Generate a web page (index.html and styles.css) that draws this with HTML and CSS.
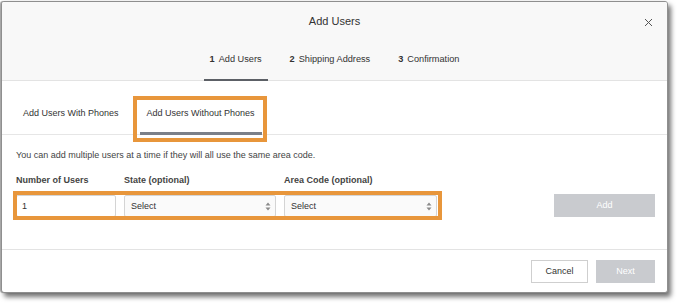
FILE: index.html
```html
<!DOCTYPE html>
<html>
<head>
<meta charset="utf-8">
<title>Add Users</title>
<link rel="stylesheet" href="styles.css">
</head>
<body>
<div class="dialog">
  <div class="header">
    <div class="title">Add Users</div>
    <div class="close"><svg width="9" height="9" viewBox="0 0 9 9"><path d="M1 1L8 8M8 1L1 8" stroke="#555" stroke-width="1" fill="none"/></svg></div>
    <div class="steps">
      <div class="step active"><b>1</b><span>Add Users</span></div>
      <div class="step"><b>2</b><span>Shipping Address</span></div>
      <div class="step"><b>3</b><span>Confirmation</span></div>
    </div>
  </div>
  <div class="content">
    <div class="tabs">
      <div class="tab">Add Users With Phones</div>
      <div class="tab active">Add Users Without Phones</div>
    </div>
    <p class="desc">You can add multiple users at a time if they will all use the same area code.</p>
    <div class="form">
      <label class="lbl">Number of Users</label>
      <label class="lbl">State (optional)</label>
      <label class="lbl">Area Code (optional)</label>
      <span></span>
      <span></span>
      <div class="input">1</div>
      <div class="select">Select<svg class="arrows" width="6" height="9" viewBox="0 0 6 9"><path d="M0.5 3.5L3 0.5L5.5 3.5Z M0.5 5.5L3 8.5L5.5 5.5Z" fill="#8a8a8a"/></svg></div>
      <div class="select">Select<svg class="arrows" width="6" height="9" viewBox="0 0 6 9"><path d="M0.5 3.5L3 0.5L5.5 3.5Z M0.5 5.5L3 8.5L5.5 5.5Z" fill="#8a8a8a"/></svg></div>
      <span></span>
      <div class="btn disabled add">Add</div>
    </div>
  </div>
  <div class="footer">
    <div class="btn cancel">Cancel</div>
    <div class="btn disabled next">Next</div>
  </div>
</div>
<div class="mark mark-tab"></div>
<div class="mark mark-row"></div>
</body>
</html>
```
FILE: styles.css
```css
html, body {
  margin: 0;
  padding: 0;
  background: #ffffff;
}
body {
  font-family: "Liberation Sans", Arial, sans-serif;
  color: #333;
  width: 681px;
  height: 306px;
  overflow: hidden;
  position: relative;
}
.dialog {
  margin: 1px 0 0 1px;
  width: 667px;
  height: 292px;
  box-sizing: border-box;
  border: 1px solid #8f8f8f;
  border-radius: 3px;
  background: #fff;
  box-shadow: -1px 0 1px rgba(0,0,0,0.35), 3px 4px 5px rgba(0,0,0,0.55);
  display: flex;
  flex-direction: column;
  overflow: hidden;
}
.header {
  background: #f8f8f8;
  position: relative;
}
.title {
  height: 38px;
  line-height: 38px;
  text-align: center;
  font-size: 11px;
  color: #333;
}
.close {
  position: absolute;
  top: 16px;
  right: 14px;
  width: 9px;
  height: 9px;
  line-height: 0;
}
.steps {
  height: 40px;
  border-bottom: 1px solid #e3e3e3;
  display: flex;
  justify-content: center;
  gap: 16px;
}
.step {
  height: 41px;
  box-sizing: border-box;
  margin-bottom: -1px;
  padding: 0 6px;
  line-height: 38px;
  font-size: 9.2px;
  color: #333;
  border-bottom: 2px solid transparent;
  display: flex;
  gap: 4px;
}
.step b {
  font-weight: bold;
}
.step.active {
  border-bottom-color: #5c6066;
}
.content {
  flex: 1;
  padding: 0 12px 0 14px;
}
.tabs {
  height: 53px;
  border-bottom: 1px solid #e6e6e6;
  margin: 0 -12px 0 -14px;
  padding-left: 14px;
  display: flex;
  gap: 14px;
}
.tab {
  height: 54px;
  box-sizing: border-box;
  margin-bottom: -1px;
  padding: 24px 7px 0;
  line-height: 16px;
  font-size: 9px;
  color: #333;
  border-bottom: 2px solid transparent;
}
.tab.active {
  border-bottom: 3px solid #7b8089;
}
.desc {
  margin: 13px 0 0;
  line-height: 14px;
  font-size: 9px;
  color: #444;
}
.form {
  margin-top: 12px;
  display: grid;
  grid-template-columns: 100px 152px 153px 1fr 101px;
  column-gap: 8px;
  row-gap: 9px;
}
.lbl {
  font-size: 9px;
  font-weight: bold;
  line-height: 12px;
  color: #444;
}
.input, .select {
  height: 22px;
  box-sizing: border-box;
  border: 1px solid #d4d4d4;
  border-radius: 2px;
  font-size: 9px;
  line-height: 20px;
  color: #333;
  padding-left: 5px;
  background: #fff;
}
.select {
  background: #fafafa;
  display: flex;
  justify-content: space-between;
  align-items: center;
  padding: 0 4px 0 6px;
}
.arrows {
  display: block;
}
.btn {
  height: 23px;
  box-sizing: border-box;
  font-size: 9px;
  line-height: 21px;
  text-align: center;
  border: 1px solid transparent;
}
.btn.disabled {
  background: #c9cbcf;
  color: #fff;
  border-color: #c9cbcf;
}
.add {
  height: 23px;
  margin-top: -1px;
}
.footer {
  height: 43px;
  box-sizing: border-box;
  border-top: 1px solid #e3e3e3;
  padding: 10px 12px 0 0;
  display: flex;
  justify-content: flex-end;
  gap: 8px;
}
.cancel {
  width: 57px;
  background: #fff;
  border-color: #cfcfcf;
  color: #333;
}
.next {
  width: 59px;
}
.mark {
  position: absolute;
  border: 4px solid #e8963b;
  box-sizing: border-box;
  pointer-events: none;
}
.mark-tab {
  left: 133px;
  top: 96px;
  width: 134px;
  height: 46px;
}
.mark-row {
  left: 13px;
  top: 191px;
  width: 429px;
  height: 29px;
}
```
